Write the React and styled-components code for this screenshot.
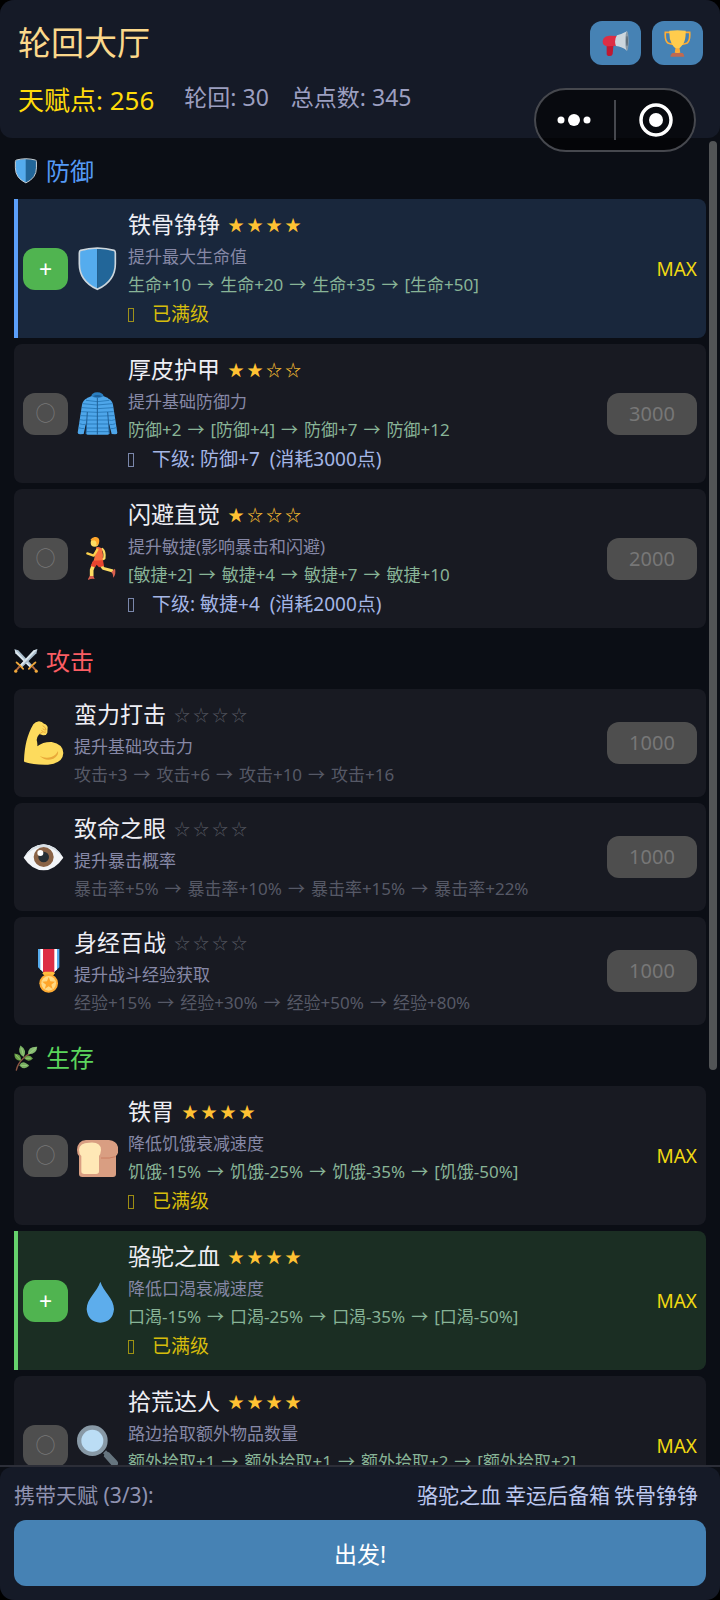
import React from "react";
import styled, { createGlobalStyle, css } from "styled-components";

const GlobalStyle = createGlobalStyle`
  *, *::before, *::after { box-sizing: border-box; }
  body {
    margin: 0;
    background: #000;
    font-family: "Noto Sans", "Noto Sans CJK SC", sans-serif;
  }
  button { font: inherit; border: 0; padding: 0; margin: 0; cursor: pointer; }
  button:disabled { cursor: default; }
  h1, h2, h3, p, ul { margin: 0; padding: 0; font-weight: 400; }
  ul { list-style: none; }
`;

const Screen = styled.div`
  position: relative;
  display: flex;
  flex-direction: column;
  height: 100vh;
  overflow: hidden;
  border-radius: 14px;
  background: #0b0e15;
  color: #eeeef4;
`;

const Header = styled.header`
  flex: none;
  padding: 21px 17px 19px 18px;
  border-radius: 12px;
  background: #151a27;
`;

const TitleRow = styled.div`
  display: flex;
  align-items: center;
  justify-content: space-between;
  margin-bottom: 16px;
`;

const Title = styled.h1`
  font-size: 33px;
  line-height: 44px;
  color: #fbd88b;
`;

const Actions = styled.div`
  display: flex;
  gap: 11px;
`;

const IconButton = styled.button`
  display: flex;
  align-items: center;
  justify-content: center;
  width: 51px;
  height: 44px;
  border-radius: 12px;
  background: #4682b4;
`;

const Stats = styled.div`
  display: flex;
  align-items: flex-start;
  gap: 22px;
`;

const Points = styled.span`
  margin-right: 8px;
  font-size: 26px;
  line-height: 38px;
  color: #ffdb0a;
`;

const Stat = styled.span`
  font-size: 23px;
  line-height: 32px;
  color: #9c9fc0;
`;

const Capsule = styled.div`
  position: absolute;
  top: 88px;
  right: 24px;
  display: flex;
  align-items: center;
  width: 162px;
  height: 64px;
  border: 2px solid #46484e;
  border-radius: 32px;
  background: rgba(0, 0, 0, 0.6);
`;

const CapsuleButton = styled.button`
  display: flex;
  flex: 1;
  align-items: center;
  justify-content: center;
  height: 100%;
  background: none;
`;

const CapsuleDivider = styled.span`
  width: 2px;
  height: 40px;
  background: #46484e;
`;

const ListArea = styled.div`
  position: relative;
  flex: 1;
  min-height: 0;
`;

const List = styled.main`
  height: 100%;
  padding: 0 14px;
  overflow-y: auto;
  scrollbar-width: none;
`;

const ScrollThumb = styled.span`
  position: absolute;
  top: 3px;
  right: 3px;
  width: 8px;
  height: 70%;
  border-radius: 4px;
  background: #525456;
`;

const SectionTitle = styled.h2`
  display: flex;
  align-items: center;
  gap: 8px;
  height: 61px;
  padding-top: 4px;
  font-size: 24px;
  line-height: 36px;
  color: ${(p) => p.$color};
`;

const Cards = styled.ul`
  display: flex;
  flex-direction: column;
  gap: 6px;
`;

const selectedCard = css`
  padding-left: 5px;
  border-left: 4px solid ${(p) => p.$tone.bar};
  border-radius: 0 8px 8px 0;
  background: ${(p) => p.$tone.fill};
`;

const Card = styled.li`
  display: flex;
  align-items: center;
  gap: 10px;
  padding: 8px 9px;
  border-radius: 8px;
  background: #181a22;
  ${(p) => p.$tone && selectedCard}
`;

const Toggle = styled.button`
  flex: none;
  width: 45px;
  height: 42px;
  margin-right: -1px;
  border-radius: 12px;
  font-size: ${(p) => (p.$on ? "23px" : "20px")};
  line-height: 42px;
  color: ${(p) => (p.$on ? "#fff" : "#777")};
  background: ${(p) => (p.$on ? "#50b450" : "#4e4e4e")};
`;

const Body = styled.div`
  flex: 1;
  min-width: 0;
`;

const NameRow = styled.div`
  display: flex;
  align-items: center;
  gap: 8px;
  margin-bottom: 2px;
`;

const Name = styled.h3`
  font-size: 23px;
  line-height: 34px;
`;

const Stars = styled.span`
  display: flex;
  gap: 3px;
  font-family: "Noto Sans CJK SC", sans-serif;
  font-size: 16px;
  line-height: 32px;
  color: ${(p) => (p.$dim ? "#53555f" : "#ffc233")};
`;

const Description = styled.p`
  font-size: 17px;
  line-height: 28px;
  color: #8688a6;
`;

const Levels = styled.p`
  display: flex;
  gap: 6px;
  font-size: 17px;
  line-height: 28px;
  white-space: nowrap;
  color: ${(p) => (p.$dim ? "#565966" : "#88b497")};
`;

const Status = styled.p`
  display: flex;
  align-items: center;
  gap: 18px;
  font-size: 19px;
  line-height: 31px;
  white-space: pre;
  color: ${(p) => (p.$max ? "#d6bd0c" : "#a4b6e6")};
`;

const StatusMark = styled.span`
  width: 6px;
  height: 14px;
  border: 1px solid currentColor;
  opacity: 0.7;
`;

const Cost = styled.button`
  flex: none;
  width: 90px;
  height: 42px;
  border-radius: 12px;
  font-size: 20px;
  line-height: 42px;
  color: #777;
  background: #4e4e4e;
`;

const Max = styled.span`
  font-size: 19px;
  line-height: 28px;
  color: #f0d812;
`;

const Footer = styled.footer`
  flex: none;
  border-top: 2px solid #2c2e38;
`;

const FooterPanel = styled.div`
  padding: 13px 14px 14px;
  border-radius: 12px;
  background: #151a27;
`;

const CarryRow = styled.div`
  display: flex;
  justify-content: space-between;
  margin-bottom: 10px;
  padding-right: 8px;
  font-size: 21px;
  line-height: 30px;
  color: #8f92b0;
`;

const Carried = styled.span`
  display: flex;
  gap: 4px;
  color: #bcc8f0;
`;

const StartButton = styled.button`
  display: block;
  width: 100%;
  height: 66px;
  border-radius: 12px;
  font-size: 23px;
  color: #fff;
  background: #4682b4;
`;

const Svg = styled.svg`
  display: block;
  flex: none;
`;

const art = {
  shield: (
    <>
      <path d="M61 4Q34 5 12 11Q8 12 8 18V50Q8 102 61 126Z" fill="#55acee" />
      <path d="M61 4Q88 5 110 11Q114 12 114 18V50Q114 102 61 126Z" fill="#226699" />
      <path d="M61 3Q34 4 11 10Q7 12 7 18V50Q7 102 61 127Q115 102 115 50V18Q115 12 111 10Q88 4 61 3Z" fill="none" stroke="#ccd6dd" strokeWidth="5" />
    </>
  ),
  jacket: (
    <>
      <path d="M30 19Q18 24 15 38L2 122Q3 127 10 127L20 126L32 70L90 70L104 126L114 127Q121 127 121 122L108 38Q105 24 92 19Z" fill="#4ea6ea" />
      <path d="M30 18L46 11L77 11L93 18L97 124Q97 128 92 128H32Q27 128 27 124Z" fill="#4ea6ea" />
      <path d="M43 13Q44 2 61 1Q78 2 80 13Q62 23 43 13Z" fill="#2a7ec0" />
      <path d="M48 13Q61 5 75 13Q62 19 48 13Z" fill="#1c5f99" />
      <path d="M17 35Q60 43 106 35M15 47Q60 53 108 47M12 59Q60 63 110 59M10 71Q60 74 112 71M9 83Q22 86 28 84M95 84Q103 87 114 83M7 95Q18 99 25 97M98 97Q105 99 116 95M5 107Q15 111 23 109M100 109Q108 111 118 107M29 84H95M29 96H95M29 108H95M28 119H96M27 25Q60 33 97 25" stroke="#2b7dbd" strokeWidth="3" fill="none" />
      <path d="M61 18V128M31 60L27 126M92 60L97 126" stroke="#205f96" strokeWidth="3" fill="none" />
    </>
  ),
  runner: (
    <>
      <path d="M76 36Q85 44 82 64L74 68" fill="none" stroke="#fddd63" strokeWidth="7" strokeLinecap="round" strokeLinejoin="round" />
      <path d="M52 78L44 99V118" fill="none" stroke="#fddd63" strokeWidth="11" strokeLinejoin="round" />
      <path d="M70 82L79 94L108 102" fill="none" stroke="#fddd63" strokeWidth="9" strokeLinejoin="round" />
      <path d="M58 31Q67 28 75 35Q80 54 77 72L49 75Q55 56 58 31Z" fill="#f7703f" />
      <path d="M48 71L78 70L81 87L66 91L59 83L54 91L41 87Z" fill="#e8452f" />
      <path d="M61 38L50 56L31 49" fill="none" stroke="#fbd04c" strokeWidth="7" strokeLinecap="round" strokeLinejoin="round" />
      <circle cx="53" cy="17" r="12" fill="#fddd63" />
      <path d="M40 9Q45 -1 57 0Q70 3 66 18Q63 25 57 26Q62 14 52 10Q46 12 40 9Z" fill="#ffa62b" />
      <path d="M38 117H49L53 126Q42 124 34 129Q32 126 38 117Z" fill="#d9604f" />
      <path d="M103 105L114 95Q118 110 109 122Q109 110 103 105Z" fill="#d9604f" />
    </>
  ),
  arm: (
    <>
      <path d="M3 119C5 75 12 43 31 10Q37 2 48 1Q57 2 63 8Q73 11 74 19L73 35Q70 44 60 43L49 39Q42 47 41 57Q44 67 43 76Q60 62 86 63Q120 69 121 96Q120 127 75 131Q30 132 8 124Q3 124 3 119Z" fill="#fddb5d" />
      <path d="M50 105Q68 114 85 108Q99 103 105 90Q108 104 91 113Q68 122 50 105Z" fill="#e9a93a" />
      <path d="M59 14Q69 19 69 27Q64 28 59 23M55 28Q64 37 69 33M49 39L60 32" fill="none" stroke="#e9a93a" strokeWidth="3" />
    </>
  ),
  eye: (
    <>
      <path d="M2 68Q25 29 62 28Q97 29 121 68Q96 105 62 106Q26 105 2 68Z" fill="#f3f5f8" />
      <path d="M2 68Q25 29 62 28Q97 29 121 68Q95 37 62 36Q27 37 2 68Z" fill="#d8e0e6" />
      <circle cx="62" cy="66" r="30" fill="#8a6346" />
      <circle cx="62" cy="66" r="16" fill="#262e34" />
      <circle cx="52" cy="54" r="9" fill="#fff" />
    </>
  ),
  medal: (
    <>
      <path d="M45 0H109V55L91 72H63L45 55Z" fill="#55acee" />
      <path d="M52 0H102V61L91 72H63L52 61Z" fill="#fff" />
      <path d="M60 0H94V72H60Z" fill="#dd2e44" />
      <path d="M58 73Q60 68 66 68H88Q94 68 96 73L91 79H63Z" fill="#ffbe3d" />
      <circle cx="77" cy="103" r="28" fill="#ffac33" />
      <circle cx="77" cy="103" r="22" fill="#ffd983" />
      <path d="M77 84L82 97L96 98L85 107L89 120L77 112L65 120L69 107L58 98L72 97Z" fill="#ffa52a" />
    </>
  ),
  bread: (
    <>
      <path d="M27 18H96Q124 21 124 48Q124 60 117 66V120Q117 129 108 129H16Q6 129 6 120V66Q0 60 0 47Q2 20 27 18Z" fill="#d99e82" />
      <path d="M36 26Q72 22 72 48Q71 61 66 66V112Q66 120 57 120H22Q13 120 13 112V66Q6 60 6 47Q8 26 36 26Z" fill="#ffe8b6" />
      <path d="M72 72Q100 74 116 68" fill="none" stroke="#c1694f" strokeWidth="3" opacity="0.6" />
    </>
  ),
  drop: (
    <path d="M70 8C79 38 111 58 111 91Q107 130 70 131Q33 130 29 91C29 58 61 38 70 8Z" fill="#5dadec" />
  ),
  magnifier: (
    <>
      <path d="M78 88L87 79L96 88L87 97Z" fill="#66757f" />
      <path d="M80 97Q84 84 96 85L120 110Q127 119 119 126Q111 132 104 124Z" fill="#66757f" />
      <circle cx="46" cy="50" r="46" fill="#8899a6" />
      <circle cx="46" cy="50" r="33" fill="#bbddf5" />
    </>
  ),
  swords: (
    <>
      <path d="M3 6L22 11L94 88L82 99L8 26Z" fill="#a9bdcc" />
      <path d="M3 6L88 94L82 99L8 26Z" fill="#dce7ee" />
      <path d="M120 6L101 11L29 88L41 99L115 26Z" fill="#a9bdcc" />
      <path d="M120 6L35 94L29 88L101 11Z" fill="#dce7ee" />
      <path d="M17 76L47 106M106 76L76 106M13 73L22 82M110 73L101 82" stroke="#f0a83b" strokeWidth="9" strokeLinecap="round" />
      <path d="M29 94L10 115M94 94L113 115" stroke="#b96d42" strokeWidth="10" />
      <circle cx="9" cy="118" r="8" fill="#f0a83b" />
      <circle cx="114" cy="118" r="8" fill="#f0a83b" />
    </>
  ),
  herb: (
    <>
      <path d="M12 128Q19 94 47 68Q67 49 88 38" fill="none" stroke="#8c5543" strokeWidth="7" strokeLinecap="round" />
      <path d="M49 61Q14 38 33 2Q70 25 49 61Z" fill="#79b062" />
      <path d="M72 46Q70 6 119 8Q117 48 72 46Z" fill="#86bb72" />
      <path d="M34 80Q1 80 2 43Q42 46 34 80Z" fill="#689f45" />
      <path d="M52 67Q74 38 97 68Q74 92 52 67Z" fill="#689f45" />
      <path d="M27 104Q44 71 78 106Q51 131 27 104Z" fill="#79b062" />
      <path d="M39 15L48 53M113 14L80 42M9 50L32 75M59 67H86M37 105H67" stroke="#a6d388" strokeWidth="4" />
    </>
  ),
  megaphone: (
    <>
      <path d="M14 40H35L32 72Q30 79 23 78Q14 78 14 72Z" fill="#be1931" />
      <path d="M5 25Q11 16 24 17L45 18L42 47L22 49Q8 49 3 41Q0 33 5 25Z" fill="#dd2e44" />
      <path d="M45 16Q60 12 75 4Q82 33 75 62Q60 50 42 48Q35 31 45 16Z" fill="#ccd6dd" />
      <ellipse cx="75" cy="33" rx="5" ry="29" fill="#8899a6" />
      <ellipse cx="75" cy="33" rx="3" ry="15" fill="#5f6f7b" />
    </>
  ),
  trophy: (
    <>
      <path d="M20 7H4Q2 33 13 40Q22 43 29 43M61 7H77Q79 33 68 40Q59 43 52 43" fill="none" stroke="#ffac33" strokeWidth="5" />
      <path d="M16 2Q40 -1 65 2Q66 30 57 43Q50 52 46 55V68H35V55Q29 51 23 41Q15 26 16 2Z" fill="#ffcc4d" />
      <path d="M35 55H46L49 68H32Z" fill="#ffac33" />
      <path d="M25 69H56Q60 73 61 80H19Q20 73 25 69Z" fill="#c1694f" />
    </>
  ),
};

function Art({ name, width = 41, height = 44, box = "0 0 123 132" }) {
  return (
    <Svg width={width} height={height} viewBox={box} aria-hidden="true">
      {art[name]}
    </Svg>
  );
}

const tones = {
  blue: { bar: "#5b9ffa", fill: "#19273c" },
  green: { bar: "#66d26c", fill: "#1b2e23" },
};

const sections = [
  {
    title: "防御",
    icon: "shield",
    color: "#559af5",
    talents: [
      { name: "铁骨铮铮", icon: "shield", level: 4, tone: "blue", desc: "提升最大生命值", steps: "生命+10 → 生命+20 → 生命+35 → [生命+50]" },
      { name: "厚皮护甲", icon: "jacket", level: 2, desc: "提升基础防御力", steps: "防御+2 → [防御+4] → 防御+7 → 防御+12", next: "下级: 防御+7  (消耗3000点)", cost: 3000 },
      { name: "闪避直觉", icon: "runner", level: 1, desc: "提升敏捷(影响暴击和闪避)", steps: "[敏捷+2] → 敏捷+4 → 敏捷+7 → 敏捷+10", next: "下级: 敏捷+4  (消耗2000点)", cost: 2000 },
    ],
  },
  {
    title: "攻击",
    icon: "swords",
    color: "#fb5d63",
    talents: [
      { name: "蛮力打击", icon: "arm", level: 0, desc: "提升基础攻击力", steps: "攻击+3 → 攻击+6 → 攻击+10 → 攻击+16", cost: 1000 },
      { name: "致命之眼", icon: "eye", level: 0, desc: "提升暴击概率", steps: "暴击率+5% → 暴击率+10% → 暴击率+15% → 暴击率+22%", cost: 1000 },
      { name: "身经百战", icon: "medal", level: 0, desc: "提升战斗经验获取", steps: "经验+15% → 经验+30% → 经验+50% → 经验+80%", cost: 1000 },
    ],
  },
  {
    title: "生存",
    icon: "herb",
    color: "#5cd65c",
    talents: [
      { name: "铁胃", icon: "bread", level: 4, desc: "降低饥饿衰减速度", steps: "饥饿-15% → 饥饿-25% → 饥饿-35% → [饥饿-50%]" },
      { name: "骆驼之血", icon: "drop", level: 4, tone: "green", desc: "降低口渴衰减速度", steps: "口渴-15% → 口渴-25% → 口渴-35% → [口渴-50%]" },
      { name: "拾荒达人", icon: "magnifier", level: 4, desc: "路边拾取额外物品数量", steps: "额外拾取+1 → 额外拾取+1 → 额外拾取+2 → [额外拾取+2]" },
    ],
  },
];

function Talent({ talent }) {
  const { name, icon, level, tone, desc, steps, next, cost } = talent;
  const owned = level > 0;
  return (
    <Card $tone={tones[tone]}>
      {owned && (
        <Toggle type="button" $on={Boolean(tone)} disabled={!tone}>
          {tone ? "+" : "○"}
        </Toggle>
      )}
      <Art name={icon} />
      <Body>
        <NameRow>
          <Name>{name}</Name>
          <Stars $dim={!owned}>
            {[0, 1, 2, 3].map((i) => (
              <span key={i}>{i < level ? "★" : "☆"}</span>
            ))}
          </Stars>
        </NameRow>
        <Description>{desc}</Description>
        <Levels $dim={!owned}>
          {steps.split(" ").map((part, i) => (
            <span key={i}>{part}</span>
          ))}
        </Levels>
        {owned && (
          <Status $max={!cost}>
            <StatusMark />
            {cost ? next : "已满级"}
          </Status>
        )}
      </Body>
      {cost ? (
        <Cost type="button" disabled>{cost}</Cost>
      ) : (
        <Max>MAX</Max>
      )}
    </Card>
  );
}

export default function App() {
  return (
    <Screen>
      <GlobalStyle />
      <Header>
        <TitleRow>
          <Title>轮回大厅</Title>
          <Actions>
            <IconButton type="button" aria-label="公告">
              <Art name="megaphone" width={27} height={27} box="0 0 81 81" />
            </IconButton>
            <IconButton type="button" aria-label="成就">
              <Art name="trophy" width={27} height={27} box="0 0 81 81" />
            </IconButton>
          </Actions>
        </TitleRow>
        <Stats>
          <Points>天赋点: 256</Points>
          <Stat>轮回: 30</Stat>
          <Stat>总点数: 345</Stat>
        </Stats>
      </Header>

      <ListArea>
        <List>
          {sections.map((s) => (
            <section key={s.title}>
              <SectionTitle $color={s.color}>
                <Art name={s.icon} width={24} height={26} />
                {s.title}
              </SectionTitle>
              <Cards>
                {s.talents.map((t) => (
                  <Talent key={t.name} talent={t} />
                ))}
              </Cards>
            </section>
          ))}
        </List>
        <ScrollThumb />
      </ListArea>

      <Footer>
        <FooterPanel>
          <CarryRow>
            <span>携带天赋 (3/3):</span>
            <Carried>
              <span>骆驼之血</span>
              <span>幸运后备箱</span>
              <span>铁骨铮铮</span>
            </Carried>
          </CarryRow>
          <StartButton type="button">出发!</StartButton>
        </FooterPanel>
      </Footer>

      <Capsule>
        <CapsuleButton type="button" aria-label="更多">
          <Svg width="38" height="14" viewBox="0 0 38 14" fill="#fff">
            <circle cx="5" cy="7" r="3.5" />
            <circle cx="18" cy="7" r="6" />
            <circle cx="31" cy="7" r="3.5" />
          </Svg>
        </CapsuleButton>
        <CapsuleDivider />
        <CapsuleButton type="button" aria-label="关闭">
          <Svg width="36" height="34" viewBox="0 0 36 34">
            <circle cx="19" cy="17" r="15" fill="none" stroke="#fff" strokeWidth="3.5" />
            <circle cx="19" cy="17" r="7" fill="#fff" />
          </Svg>
        </CapsuleButton>
      </Capsule>
    </Screen>
  );
}
